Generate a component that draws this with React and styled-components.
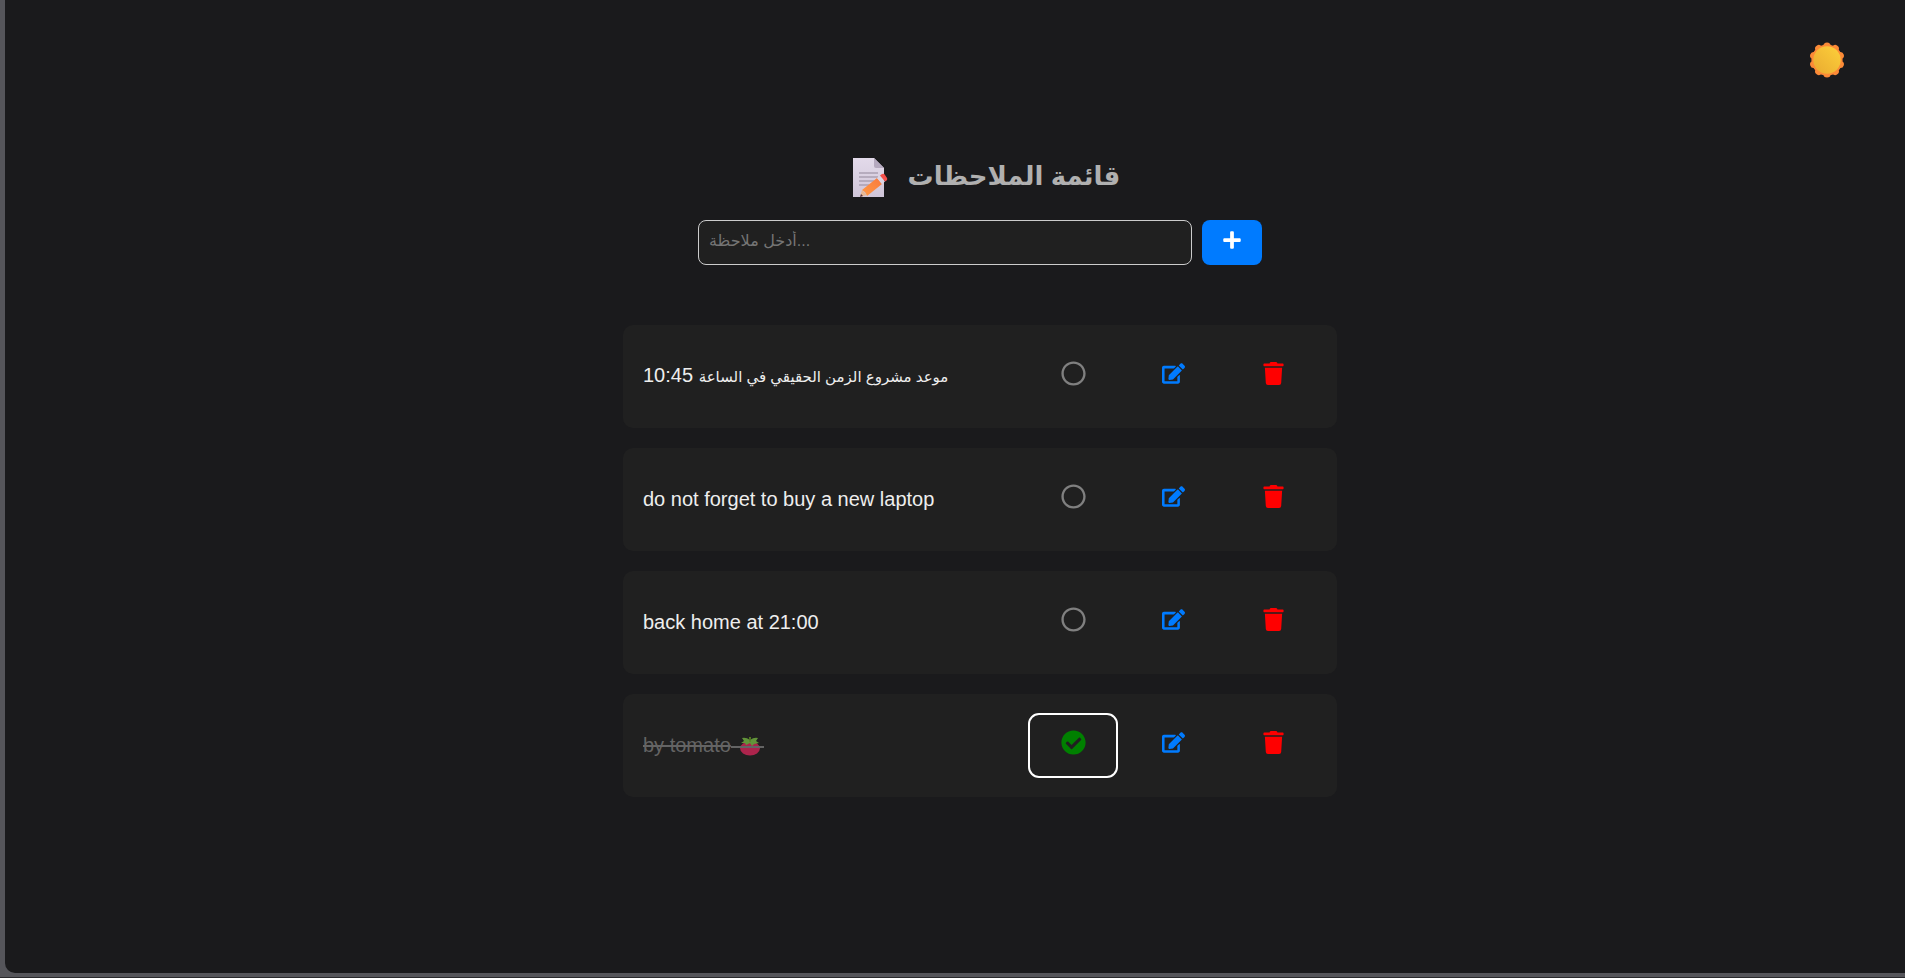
import React, { useState } from "react";
import styled, { createGlobalStyle, css } from "styled-components";
import { FaCheckCircle, FaEdit, FaPlus, FaRegCircle, FaTrash } from "react-icons/fa";

const GlobalStyle = createGlobalStyle`
  * { box-sizing: border-box; }
  body {
    margin: 0;
    background: #55555a;
    font-family: "Liberation Sans", "DejaVu Sans", sans-serif;
  }
`;

const Window = styled.div`
  min-height: 100vh;
  padding: 0 0 4px 5px;
  border-bottom: 1px solid #29292c;
  display: flex;
`;

const Page = styled.main`
  flex: 1;
  display: flex;
  flex-direction: column;
  padding: 40px 50px;
  background: #1a1a1c;
  border-bottom-left-radius: 10px;
`;

const TopBar = styled.header`
  display: flex;
  justify-content: flex-end;
  padding: 0 8px;
`;

const ThemeButton = styled.button`
  display: flex;
  padding: 2px;
  border: 0;
  background: none;
  cursor: pointer;
`;

const Content = styled.section`
  display: flex;
  flex-direction: column;
  width: 100%;
  max-width: 764px;
  margin: 0 auto;
  padding: 76px 0 0 50px;
`;

const Title = styled.h1`
  display: flex;
  align-items: center;
  justify-content: center;
  gap: 20px;
  height: 44px;
  margin: 0 0 20px;
  padding-left: 12px;
  color: #b0b0b0;
  font-size: 26px;
  line-height: 44px;
`;

const TitleText = styled.span`
  height: 48px;
`;

const Form = styled.form`
  display: flex;
  gap: 10px;
  padding: 0 75px;
`;

const NoteInput = styled.input`
  flex: 1;
  min-width: 0;
  height: 45px;
  padding: 0 10px 4px;
  border: 1px solid #ccc;
  border-radius: 8px;
  background: #202020;
  color: #eee;
  font-family: inherit;
  font-size: 16px;
  &::placeholder { color: #757575; opacity: 1; }
`;

const AddButton = styled.button`
  display: flex;
  align-items: center;
  justify-content: center;
  width: 60px;
  height: 45px;
  padding: 0 0 5px;
  border: 0;
  border-radius: 8px;
  background: #007bff;
  color: #fff;
  font-size: 20px;
  cursor: pointer;
`;

const NoteList = styled.ul`
  display: flex;
  flex-direction: column;
  gap: 20px;
  margin: 60px 0 0;
  padding: 0;
  list-style: none;
`;

const NoteCard = styled.li`
  display: flex;
  align-items: center;
  min-height: 103px;
  padding: 20px;
  border-radius: 10px;
  background: #202020;
`;

const NoteText = styled.span`
  flex: 1;
  padding-bottom: 2px;
  color: #eee;
  font-size: 20px;
  line-height: 24px;
  svg { vertical-align: middle; }
  ${({ $done }) => $done && css`
    padding-bottom: 0;
    color: #646464;
    text-decoration: line-through;
  `}
`;

const ArabicText = styled.span`
  font-size: 15px;
`;

const Actions = styled.div`
  display: flex;
  gap: 12px;
`;

const IconButton = styled.button`
  display: flex;
  align-items: center;
  justify-content: center;
  width: 88px;
  height: 63px;
  padding: 0 0 6px;
  border: 0;
  border-radius: 10px;
  background: none;
  color: ${({ $color }) => $color};
  font-size: ${({ $size }) => $size}px;
  cursor: pointer;
  ${({ $active }) => $active && css`
    outline: 2px solid #fff;
    outline-offset: -1px;
  `}
`;

const SunIcon = () => (
  <svg width="36" height="36" viewBox="0 0 36 36" aria-hidden="true">
    <defs>
      <linearGradient id="sun" x1="1" y1="0" x2="0" y2="1">
        <stop offset="0" stopColor="#fdd03a" />
        <stop offset="1" stopColor="#e9aa31" />
      </linearGradient>
    </defs>
    <g fill="#fb8a37">
      {[0, 36, 72, 108, 144, 180, 216, 252, 288, 324].map((a) => (
        <circle key={a} cx="18" cy="4" r="3.600" transform={`rotate(${a} 18 18)`} />
      ))}
      <circle cx="18" cy="18" r="15.600" />
    </g>
    <circle cx="18" cy="18" r="13.700" fill="url(#sun)" />
  </svg>
);

const MemoIcon = () => (
  <svg width="36" height="42" viewBox="0 0 36 42" aria-hidden="true">
    <defs>
      <linearGradient id="paper" x1="0" y1="0" x2="0" y2="1">
        <stop offset="0" stopColor="#e3daea" />
        <stop offset="1" stopColor="#cfc5d8" />
      </linearGradient>
      <linearGradient id="pencil" x1="0" y1="1" x2="1" y2="0">
        <stop offset="0" stopColor="#ff9a45" />
        <stop offset="1" stopColor="#f8793e" />
      </linearGradient>
    </defs>
    <path d="M1 1H22L32 11V40H1Z" fill="url(#paper)" />
    <path d="M22 1L32 11H24Q22 11 22 9Z" fill="#b5a9bf" />
    <path d="M7 16H26M7 20H26M7 24H22M7 28H17" stroke="#aaa0b2" strokeWidth="1.4" />
    <path d="M8 40L10 33L15 38Z" fill="#e8b893" />
    <path d="M8 40L9 37L11 39Z" fill="#54313d" />
    <path d="M10 33L25 21L30 27L15 39Q14 35 10 33Z" fill="url(#pencil)" />
    <path d="M25 21L28 18.500L33 24.500L30 27Z" fill="#dcd5e4" />
    <path d="M28 18.500L30 17Q32 16 33 18L35 21Q36 23 33 24.500Z" fill="#f5504b" />
  </svg>
);

const TomatoIcon = () => (
  <svg width="33" height="24" viewBox="-3 0 33 24" role="img" aria-label="tomato">
    <ellipse cx="16" cy="14.500" rx="9.900" ry="7" fill="#ac244c" />
    <path d="M8 4Q12 3 16 6Q20 3 24 4L22 7L25 9L20 10L18 12L16 9L12 11L11 9L7 9L10 7Z" fill="#62943a" />
    <path d="M15 3H17L16.500 8H15.500Z" fill="#568021" />
    <path d="M-3 13H30" stroke="#646464" strokeWidth="2" />
  </svg>
);

const initialNotes = [
  {
    id: 1,
    text: <><ArabicText>موعد مشروع الزمن الحقيقي في الساعة</ArabicText> 10:45</>,
    done: false,
  },
  { id: 2, text: "do not forget to buy a new laptop", done: false },
  { id: 3, text: "back home at 21:00", done: false },
  { id: 4, text: "by tomato", icon: <TomatoIcon />, done: true },
];

export default function App() {
  const [notes, setNotes] = useState(initialNotes);
  const [draft, setDraft] = useState("");

  const toggle = (id) =>
    setNotes(notes.map((n) => (n.id === id ? { ...n, done: !n.done } : n)));
  const remove = (id) => setNotes(notes.filter((n) => n.id !== id));
  const add = (e) => {
    e.preventDefault();
    if (!draft.trim()) return;
    setNotes([...notes, { id: Date.now(), text: draft, done: false }]);
    setDraft("");
  };

  return (
    <>
      <GlobalStyle />
      <Window>
        <Page>
          <TopBar>
            <ThemeButton aria-label="Toggle theme"><SunIcon /></ThemeButton>
          </TopBar>
          <Content>
            <Title>
              <MemoIcon />
              <TitleText>قائمة الملاحظات</TitleText>
            </Title>
            <Form onSubmit={add}>
              <NoteInput
                aria-label="أدخل ملاحظة"
                placeholder="أدخل ملاحظة..."
                value={draft}
                onChange={(e) => setDraft(e.target.value)}
              />
              <AddButton type="submit" aria-label="Add note"><FaPlus /></AddButton>
            </Form>
            <NoteList>
              {notes.map((note) => (
                <NoteCard key={note.id}>
                  <NoteText $done={note.done}>
                    {note.text}
                    {note.icon}
                  </NoteText>
                  <Actions>
                    <IconButton
                      $color={note.done ? "green" : "gray"}
                      $size={25}
                      $active={note.done}
                      aria-label="Toggle done"
                      aria-pressed={note.done}
                      onClick={() => toggle(note.id)}
                    >
                      {note.done ? <FaCheckCircle /> : <FaRegCircle />}
                    </IconButton>
                    <IconButton $color="#007bff" $size={23} aria-label="Edit note">
                      <FaEdit />
                    </IconButton>
                    <IconButton $color="red" $size={23} aria-label="Delete note" onClick={() => remove(note.id)}>
                      <FaTrash />
                    </IconButton>
                  </Actions>
                </NoteCard>
              ))}
            </NoteList>
          </Content>
        </Page>
      </Window>
    </>
  );
}
